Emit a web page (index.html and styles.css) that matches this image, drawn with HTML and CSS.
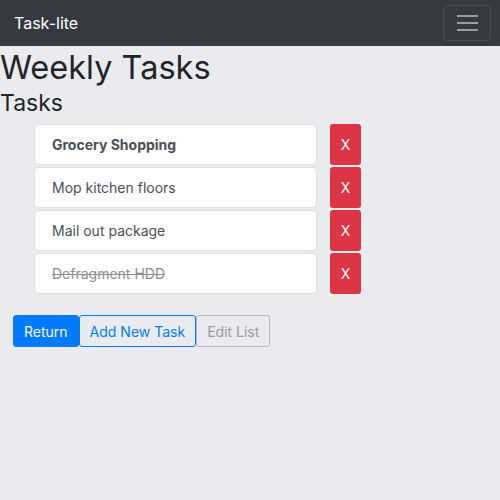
FILE: index.html
```html
<!DOCTYPE html>
<html>
<head>
<meta charset="utf-8">
<link rel="stylesheet" href="styles.css">
</head>
<body>
<nav class="navbar">
  <span class="brand">Task-lite</span>
  <button class="toggler"><span class="bar"></span><span class="bar"></span><span class="bar"></span></button>
</nav>
<h1 class="title">Weekly Tasks</h1>
<h2 class="subtitle">Tasks</h2>
<div class="tasks">
  <div class="row"><div class="item bold">Grocery Shopping</div><button class="del">X</button></div>
  <div class="row"><div class="item">Mop kitchen floors</div><button class="del">X</button></div>
  <div class="row"><div class="item">Mail out package</div><button class="del">X</button></div>
  <div class="row"><div class="item done">Defragment HDD</div><button class="del">X</button></div>
</div>
<div class="actions">
  <button class="btn primary">Return</button>
  <button class="btn outline-primary">Add New Task</button>
  <button class="btn outline-secondary">Edit List</button>
</div>
</body>
</html>
```
FILE: styles.css
```css
* { box-sizing: border-box; }
body {
  margin: 0;
  background: #eaebef;
  font-family: Inter, "Noto Sans", sans-serif;
  color: #212529;
}
.navbar {
  height: 46px;
  background: #343a40;
  display: flex;
  align-items: center;
  justify-content: space-between;
  padding: 0 9px 0 14px;
}
.brand {
  color: #fff;
  font-size: 16px;
}
.toggler {
  width: 48px;
  height: 36px;
  background: transparent;
  border: 1px solid rgba(255,255,255,0.1);
  border-radius: 4px;
  display: flex;
  flex-direction: column;
  justify-content: center;
  align-items: center;
  gap: 5px;
  padding: 0;
}
.bar {
  display: block;
  width: 21px;
  height: 2px;
  background: rgba(255,255,255,0.5);
}
.title {
  margin: 4px 0 0;
  font-size: 32.5px;
  font-weight: 400;
  line-height: 1.1;
}
.subtitle {
  margin: 5px 0 8px;
  font-size: 23px;
  font-weight: 400;
  line-height: 1.1;
}
.tasks {
  display: flex;
  flex-direction: column;
  gap: 2px;
  margin-left: 34px;
}
.row {
  display: flex;
  gap: 13px;
}
.item {
  width: 283px;
  height: 41px;
  background: #fff;
  border: 1px solid #dfe0e3;
  border-radius: 4px;
  padding: 0 17px;
  display: flex;
  align-items: center;
  font-size: 14px;
  color: #495057;
}
.item.bold { font-weight: 700; }
.item.done { text-decoration: line-through; color: #868e96; }
.del {
  width: 31px;
  height: 41px;
  background: #dc3545;
  border: none;
  border-radius: 3px;
  color: #fff;
  font-family: inherit;
  font-size: 14px;
  padding: 0;
}
.actions {
  display: flex;
  margin: 21px 0 0 13px;
}
.btn {
  height: 32px;
  font-family: inherit;
  font-size: 14px;
  padding: 0 10px;
  border-radius: 3px;
  background: transparent;
}
.primary { background: #007bff; border: 1px solid #007bff; color: #fff; }
.outline-primary { border: 1px solid #007bff; color: #007bff; }
.outline-secondary { border: 1px solid #b3b7bb; color: #979ca1; }
```
